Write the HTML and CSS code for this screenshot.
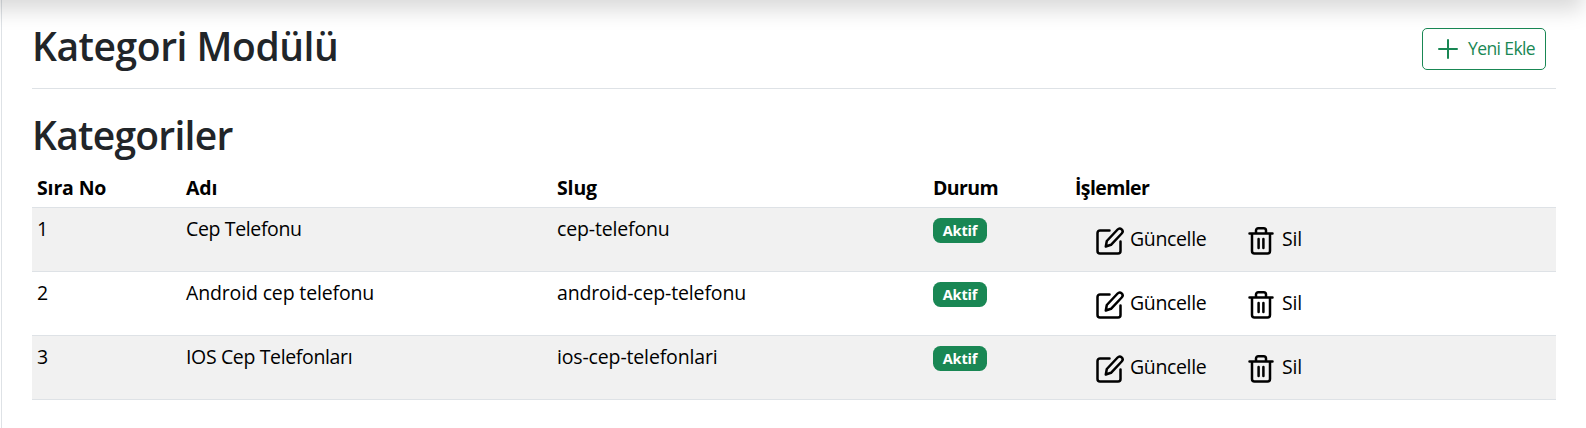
FILE: index.html
```html
<!DOCTYPE html>
<html lang="tr">
<head>
<meta charset="utf-8">
<title>Kategori Modülü</title>
<link rel="stylesheet" href="styles.css">
</head>
<body>
<svg class="sprite" aria-hidden="true">
  <symbol id="edit" viewBox="0 0 30 30"><path d="M15.500 4.500H6a2.500 2.500 0 0 0-2.500 2.500V25a2.500 2.500 0 0 0 2.500 2.500h18a2.500 2.500 0 0 0 2.500-2.500V15.500M11.800 20.500l1-5.500L23.600 3.500a2.800 2.800 0 0 1 4.100 4L17 18.800z"/></symbol>
  <symbol id="trash" viewBox="0 0 30 30"><path d="M3.500 7.500h23M6 7.500V25a2.500 2.500 0 0 0 2.500 2.500h13a2.500 2.500 0 0 0 2.500-2.500V7.500M10 7V4.500A2.300 2.300 0 0 1 12.300 2.200h5.400A2.300 2.300 0 0 1 20 4.500V7M12.600 13v9M17.400 13v9"/></symbol>
</svg>
<main class="page">
  <header class="topbar">
    <h1 class="title title-module">Kategori Modülü</h1>
    <a class="btn-add"><svg class="plus" viewBox="0 0 20 20"><path d="M10 1v18M1 10h18"/></svg><span>Yeni Ekle</span></a>
  </header>
  <h1 class="title title-list">Kategoriler</h1>
  <table class="table">
    <colgroup><col class="c-no"><col class="c-name"><col class="c-slug"><col class="c-state"><col></colgroup>
    <thead><tr><th>Sıra No</th><th>Adı</th><th>Slug</th><th>Durum</th><th>İşlemler</th></tr></thead>
    <tbody>
      <tr><td>1</td><td class="name-short">Cep Telefonu</td><td>cep-telefonu</td><td><span class="badge">Aktif</span></td><td><div class="actions"><a class="action"><svg class="icon"><use href="#edit"/></svg><span class="update">Güncelle</span></a><a class="action"><svg class="icon"><use href="#trash"/></svg><span class="delete">Sil</span></a></div></td></tr>
      <tr><td>2</td><td>Android cep telefonu</td><td>android-cep-telefonu</td><td><span class="badge">Aktif</span></td><td><div class="actions"><a class="action"><svg class="icon"><use href="#edit"/></svg><span class="update">Güncelle</span></a><a class="action"><svg class="icon"><use href="#trash"/></svg><span class="delete">Sil</span></a></div></td></tr>
      <tr><td>3</td><td class="name-short">IOS Cep Telefonları</td><td>ios-cep-telefonlari</td><td><span class="badge">Aktif</span></td><td><div class="actions"><a class="action"><svg class="icon"><use href="#edit"/></svg><span class="update">Güncelle</span></a><a class="action"><svg class="icon"><use href="#trash"/></svg><span class="delete">Sil</span></a></div></td></tr>
    </tbody>
  </table>
</main>
<div class="shade"></div>
</body>
</html>
```
FILE: styles.css
```css
* { box-sizing: border-box; }
body { margin: 0; overflow: hidden; background: #fff; color: #000; font: 19.5px/30px "Open Sans", "Noto Sans", sans-serif; letter-spacing: -0.15px; }
.sprite { position: absolute; width: 0; height: 0; }
.page { height: 428px; margin-left: 1px; padding: 0 30px; border-left: 1px solid #dee2e6; }
.topbar { display: flex; justify-content: space-between; align-items: flex-start; height: 89px; padding: 22px 10px 0 0; border-bottom: 1px solid #dee2e6; }
.title { margin: 0; color: #212529; font-size: 39px; line-height: 47px; font-weight: 600; letter-spacing: -0.45px; }
.title-list { padding-top: 22px; height: 78px; letter-spacing: -0.75px; }
.btn-add { display: flex; align-items: center; gap: 10px; width: 124px; height: 42px; margin-top: 6px; padding-left: 15px; border: 1px solid #198754; border-radius: 5px; color: #198754; font-size: 17.5px; letter-spacing: -0.6px; white-space: nowrap; }
.btn-add span { padding-bottom: 3px; }
.plus { width: 20px; height: 20px; flex: none; fill: none; stroke: #198754; stroke-width: 2; stroke-linecap: round; }
.table { width: 100%; table-layout: fixed; border-collapse: separate; border-spacing: 0; }
.c-no { width: 149px; }
.c-name { width: 371px; }
.c-slug { width: 376px; }
.c-state { width: 142px; }
th, td { padding: 0 5px; text-align: left; vertical-align: top; border-bottom: 1px solid #dee2e6; }
th { height: 41px; padding-top: 6px; font-weight: 700; letter-spacing: -0.6px; }
th:nth-child(-n+3) { letter-spacing: -0.15px; }
td { height: 64px; padding-top: 6px; }
.name-short { letter-spacing: -0.36px; }
tbody tr:nth-child(odd) td { background: #f1f1f1; }
.badge { display: block; width: 54px; height: 25px; margin-top: 4px; border-radius: 7.500px; background: #198754; color: #fff; font-size: 14.5px; line-height: 25px; font-weight: 700; text-align: center; }
.actions { display: flex; gap: 40px; padding: 11px 0 0 19px; }
.action { display: flex; align-items: center; height: 32px; gap: 6px; }
.action span { padding-bottom: 5px; }
.update { width: 76px; letter-spacing: -0.36px; }
.icon { width: 30px; height: 30px; fill: none; stroke: #000; stroke-width: 2.5; stroke-linecap: round; stroke-linejoin: round; }
.shade { position: absolute; inset: -80px 3px auto -40px; height: 80px; box-shadow: 0 10px 20px rgba(0,0,0,.15); }
```
